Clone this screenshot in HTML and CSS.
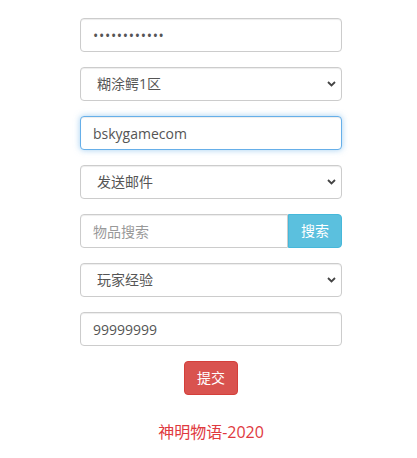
FILE: index.html
```html
<!DOCTYPE html>
<html lang="zh-CN">
<head>
<meta charset="utf-8">
<title>神明物语</title>
<link rel="stylesheet" href="styles.css">
</head>
<body>
<div class="page">
  <form class="panel">
    <div class="group">
      <input class="control password" type="password" value="dddddddddddd">
    </div>
    <div class="group select-wrap">
      <select class="control select">
        <option>糊涂鳄1区</option>
      </select>
      <svg class="chev" width="9" height="6" viewBox="0 0 9 6"><path d="M1 1 L4.5 4.5 L8 1" fill="none" stroke="#444" stroke-width="1.8"/></svg>
    </div>
    <div class="group">
      <input class="control focus" type="text" value="bskygamecom">
    </div>
    <div class="group select-wrap">
      <select class="control select">
        <option>发送邮件</option>
      </select>
      <svg class="chev" width="9" height="6" viewBox="0 0 9 6"><path d="M1 1 L4.5 4.5 L8 1" fill="none" stroke="#444" stroke-width="1.8"/></svg>
    </div>
    <div class="group input-group">
      <input class="control grouped" type="text" placeholder="物品搜索">
      <button type="button" class="btn btn-info">搜索</button>
    </div>
    <div class="group select-wrap">
      <select class="control select">
        <option>玩家经验</option>
      </select>
      <svg class="chev" width="9" height="6" viewBox="0 0 9 6"><path d="M1 1 L4.5 4.5 L8 1" fill="none" stroke="#444" stroke-width="1.8"/></svg>
    </div>
    <div class="group">
      <input class="control" type="text" value="99999999">
    </div>
    <div class="actions">
      <button type="button" class="btn btn-danger">提交</button>
    </div>
    <p class="footer">神明物语-2020</p>
  </form>
</div>
</body>
</html>
```

FILE: styles.css
```css
html, body {
  margin: 0;
  padding: 0;
  background: #fff;
}
body {
  font-family: "Open Sans", "Noto Sans CJK SC", sans-serif;
  font-size: 14px;
  color: #555;
}
.page {
  padding: 18px 0 0 80px;
}
.panel {
  width: 262px;
  display: flex;
  flex-direction: column;
  margin: 0;
}
.group {
  margin-bottom: 15px;
}
.control {
  display: block;
  box-sizing: border-box;
  width: 100%;
  height: 34px;
  padding: 6px 12px;
  font-family: "Open Sans", "Noto Sans CJK SC", sans-serif;
  font-size: 14px;
  line-height: 20px;
  color: #555;
  background: #fff;
  border: 1px solid #ccc;
  border-radius: 4px;
  box-shadow: inset 0 1px 1px rgba(0,0,0,.075);
  outline: none;
  margin: 0;
}
.control::placeholder {
  color: #999;
}
.password {
  letter-spacing: 0.7px;
}
.control.focus {
  border-color: #66afe9;
  box-shadow: inset 0 1px 1px rgba(0,0,0,.075), 0 0 6px rgba(102,175,233,.6);
}
.select-wrap {
  position: relative;
}
.select {
  -webkit-appearance: none;
  appearance: none;
  padding-left: 16px;
}
.chev {
  position: absolute;
  right: 6px;
  top: 14px;
  pointer-events: none;
}
.input-group {
  display: flex;
}
.grouped {
  flex: 1;
  width: auto;
  border-radius: 4px 0 0 4px;
}
.btn {
  box-sizing: border-box;
  height: 34px;
  padding: 6px 12px;
  font-family: "Open Sans", "Noto Sans CJK SC", sans-serif;
  font-size: 14px;
  line-height: 20px;
  color: #fff;
  border: 1px solid transparent;
  border-radius: 4px;
  cursor: pointer;
  margin: 0;
}
.btn-info {
  background: #5bc0de;
  border-color: #46b8da;
  border-radius: 0 4px 4px 0;
  width: 54px;
  padding: 6px 0;
}
.btn-danger {
  background: #d9534f;
  border-color: #d43f3a;
  width: 54px;
  padding: 6px 0;
}
.actions {
  display: flex;
  justify-content: center;
}
.footer {
  margin: 26px 0 0;
  text-align: center;
  font-size: 16px;
  line-height: 22px;
  color: #e0393e;
}
```
